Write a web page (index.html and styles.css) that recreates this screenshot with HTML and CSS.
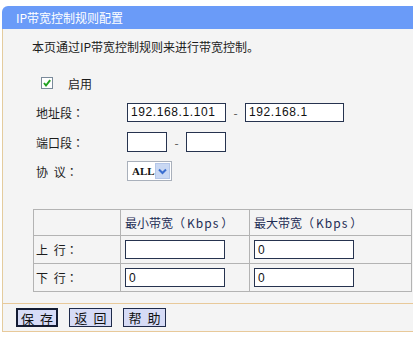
FILE: index.html
```html
<!DOCTYPE html>
<html lang="zh-CN">
<head>
<meta charset="utf-8">
<link rel="stylesheet" href="styles.css">
</head>
<body>
<div class="page">
  <div class="title">IP带宽控制规则配置</div>
  <div class="panel">
    <p class="intro">本页通过IP带宽控制规则来进行带宽控制。</p>
    <div class="enable">
      <span class="check"><svg width="12" height="12" viewBox="0 0 12 12"><rect x="0.5" y="0.5" width="11" height="11" fill="#fff" stroke="#7a8a9a"/><path d="M3 6 L5 8.5 L9.2 3.2" fill="none" stroke="#21a121" stroke-width="2"/></svg></span>
      <span>启用</span>
    </div>
    <div class="row">
      <span class="label">地址段<span class="colon" lang="ja">：</span></span>
      <input class="ip" type="text" value="192.168.1.101">
      <span class="dash">-</span>
      <input class="ip" type="text" value="192.168.1">
    </div>
    <div class="row">
      <span class="label">端口段<span class="colon" lang="ja">：</span></span>
      <input class="port" type="text" value="">
      <span class="dash dash-port">-</span>
      <input class="port" type="text" value="">
    </div>
    <div class="row">
      <span class="label">协 议<span class="colon" lang="ja">：</span></span>
      <span class="select"><span class="sel-text">ALL</span><span class="sel-btn"><svg width="9" height="7" viewBox="0 0 9 7"><path d="M1 1.5 L4.5 5 L8 1.5" fill="none" stroke="#3b6fd0" stroke-width="2"/></svg></span></span>
    </div>
    <table class="bw">
      <tr class="head">
        <td class="c1"></td>
        <td class="c2">最小带宽<span class="paren" lang="ja">（</span><span class="unit">Kbps</span><span class="paren" lang="ja">）</span></td>
        <td class="c3">最大带宽<span class="paren" lang="ja">（</span><span class="unit">Kbps</span><span class="paren" lang="ja">）</span></td>
      </tr>
      <tr>
        <td class="c1">上 行<span class="colon" lang="ja">：</span></td>
        <td class="c2"><input class="bwin" type="text" value=""></td>
        <td class="c3"><input class="bwin" type="text" value="0"></td>
      </tr>
      <tr>
        <td class="c1">下 行<span class="colon" lang="ja">：</span></td>
        <td class="c2"><input class="bwin" type="text" value="0"></td>
        <td class="c3"><input class="bwin" type="text" value="0"></td>
      </tr>
    </table>
  </div>
  <div class="btnbar">
    <button class="btn btn-focus">保 存</button>
    <button class="btn">返 回</button>
    <button class="btn">帮 助</button>
  </div>
</div>
</body>
</html>
```
FILE: styles.css
```css
body {
  margin: 0;
  background: #fff;
  font: 12px "Noto Sans CJK SC", "Liberation Sans", sans-serif;
  color: #1c1c1c;
}
.page {
  padding-top: 6px;
}
.title {
  margin-left: 2px;
  height: 23px;
  line-height: 23px;
  background: #6a9bf8;
  border-top-left-radius: 6px;
  color: #fff;
  padding-left: 14px;
  font-size: 12px;
}
.panel {
  margin-left: 2px;
  border-left: 1px solid #e4cc9e;
  background: #f4f4f4;
  padding: 9px 0 11px 0;
}
.intro {
  margin: 0;
  padding-left: 29px;
  height: 18px;
  line-height: 18px;
}
.enable {
  margin-top: 18px;
  height: 18px;
  display: flex;
  align-items: center;
  padding-left: 38px;
  gap: 15px;
}
.check {
  display: flex;
  width: 12px;
  height: 12px;
}
.row {
  margin-top: 10px;
  height: 20px;
  display: flex;
  align-items: center;
  padding-left: 33px;
}
.row:last-of-type {
  margin-top: 9px;
}
.label {
  width: 91px;
  flex: none;
  word-spacing: 3px;
}
.colon {
  font-family: "Noto Sans CJK JP", sans-serif;
}
.paren {
  font-family: "Noto Sans CJK JP", sans-serif;
}
.unit {
  letter-spacing: 1px;
  padding: 0 2px;
}
input {
  box-sizing: border-box;
  margin: 0;
  border: 1px solid #26334f;
  background: #fff;
  font: 12px "Liberation Sans", Arial, sans-serif;
  color: #111;
  padding: 0 3px;
  outline: none;
}
.ip {
  width: 99px;
  height: 19px;
  letter-spacing: 0.6px;
}
.port {
  width: 40px;
  height: 20px;
}
.dash {
  width: 19px;
  text-align: center;
  color: #555;
}
.dash-port {
  width: 19px;
}
.select {
  box-sizing: border-box;
  width: 45px;
  height: 20px;
  border: 1px solid #a9b0bb;
  background: #fff;
  display: flex;
  align-items: center;
  padding: 1px;
}
.sel-text {
  flex: 1;
  font: bold 11px "Liberation Serif", serif;
  padding-left: 3px;
  color: #111;
}
.sel-btn {
  width: 16px;
  height: 16px;
  background: #c9d8f3;
  border: 1px solid #b4c6e8;
  box-sizing: border-box;
  display: flex;
  align-items: center;
  justify-content: center;
}
.bw {
  margin-top: 28px;
  margin-left: 30px;
  width: 379px;
  border-collapse: collapse;
  border: 1px solid #a2a2a2;
}
.bw td {
  border: 1px solid #b3b3b3;
  padding: 0 4px;
  height: 26px;
  box-sizing: border-box;
}
.bw tr.head td {
  height: 26px;
  color: #1d2c55;
}
.bw .c1 {
  width: 87px;
  padding-left: 2px;
  word-spacing: 3px;
}
.bw .c2 {
  width: 129px;
}
.bw tr:nth-child(2) td,
.bw tr:nth-child(3) td {
  height: 28px;
}
.bwin {
  width: 100px;
  height: 19px;
  display: block;
}
.btnbar {
  margin-left: 2px;
  border-left: 1px solid #e4cc9e;
  border-top: 1px solid #e8c99a;
  border-bottom: 1px solid #e8c99a;
  background: #f4f4f4;
  height: 27px;
  box-sizing: content-box;
  display: flex;
  align-items: flex-start;
  padding-left: 13px;
  gap: 11px;
}
.btn {
  margin-top: 4px;
  height: 19px;
  width: 43px;
  padding: 0;
  border: 1px solid #1e2a4a;
  background: #d6dbf6;
  font: 13px "Noto Sans CJK SC", sans-serif;
  line-height: 17px;
  color: #111;
  word-spacing: 3px;
}
.btn-focus {
  width: 42px;
  border: 2px solid #141c33;
}
```
